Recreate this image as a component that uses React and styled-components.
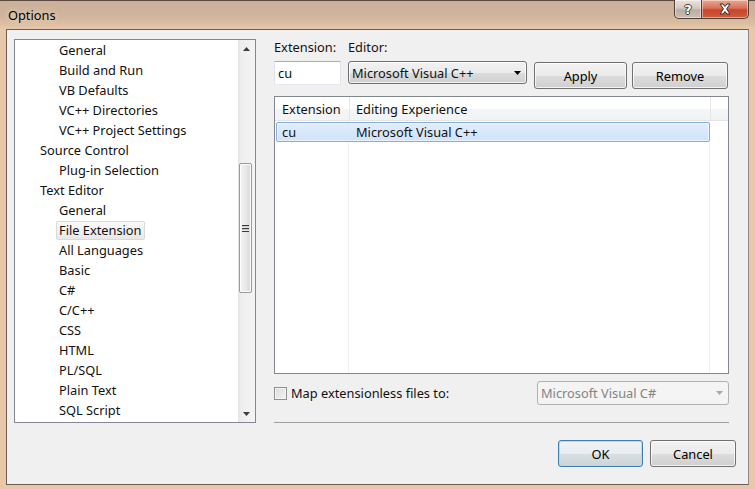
import React from 'react'
import styled, { createGlobalStyle, css } from 'styled-components'

const GlobalStyle = createGlobalStyle`
  html, body {
    margin: 0;
    padding: 0;
  }
  body {
    width: 755px;
    height: 489px;
    overflow: hidden;
    font-family: "Noto Sans", "Open Sans", sans-serif;
    font-size: 12.8px;
    color: #111;
  }
`

const Window = styled.div`
  width: 755px;
  height: 489px;
  box-sizing: border-box;
  display: flex;
  flex-direction: column;
  border-top: 1px solid #5b4a3f;
  background: linear-gradient(
    to bottom,
    #cbb09a 0,
    #d0b49c 14px,
    #dcbea2 23px,
    #e9c8aa 28px,
    #e9c8aa 100%
  );
`

const TitleBar = styled.div`
  height: 28px;
  display: flex;
  align-items: flex-start;
  justify-content: space-between;
`

const Title = styled.span`
  padding: 6px 0 0 8px;
  line-height: 16px;
  color: #000;
  text-shadow: 0 0 6px rgba(255, 240, 225, 0.9);
`

const CaptionButtons = styled.div`
  display: flex;
  margin: -1px 6px 0 0;
`

const CaptionButton = styled.div`
  height: 19px;
  box-sizing: border-box;
  display: flex;
  align-items: center;
  justify-content: center;
  border: 1px solid #4f3e34;
  border-top: none;
  box-shadow: inset 0 0 0 1px rgba(255, 255, 255, 0.45);
  ${({ $close }) =>
    $close
      ? css`
          width: 47px;
          border-left: none;
          border-radius: 0 0 5px 0;
          background: linear-gradient(
            to bottom,
            #e9a894 0,
            #d9715a 45%,
            #c8462b 55%,
            #d05b3c 100%
          );
        `
      : css`
          width: 28px;
          border-radius: 0 0 0 5px;
          background: linear-gradient(
            to bottom,
            #ece2da 0,
            #d6c9bf 45%,
            #bdaea3 55%,
            #cbbdb2 100%
          );
        `}
`

const HelpGlyph = styled.span`
  font-family: "DejaVu Sans", sans-serif;
  font-weight: bold;
  font-size: 13px;
  line-height: 13px;
  color: #fff;
  text-shadow: -1px 0 #3d3d3d, 1px 0 #3d3d3d, 0 -1px #3d3d3d, 0 1px #3d3d3d;
`

const Client = styled.div`
  flex: 1;
  margin: 0 6px 4px 6px;
  box-sizing: border-box;
  border: 1px solid #6a5d53;
  border-right-color: #8f8780;
  background: #f0f0f0;
  padding: 9px 12px 0 7px;
  display: flex;
  flex-direction: column;
`

const Body = styled.div`
  display: flex;
  gap: 18px;
  height: 384px;
`

const Tree = styled.div`
  width: 242px;
  height: 384px;
  box-sizing: border-box;
  border: 1px solid #828790;
  background: #fff;
  display: flex;
`

const TreeItems = styled.div`
  flex: 1;
  display: flex;
  flex-direction: column;
`

const TreeRow = styled.div`
  height: 20px;
  flex-shrink: 0;
  display: flex;
  align-items: center;
  padding-left: ${({ $level }) => ($level === 1 ? 22 : 41)}px;
`

const TreeLabel = styled.span`
  height: 19px;
  box-sizing: border-box;
  line-height: 17px;
  padding: 0 2px;
  border: 1px solid transparent;
  border-radius: 2px;
  white-space: nowrap;
  ${({ $selected }) =>
    $selected &&
    css`
      border-color: #d9d9d9;
      background: linear-gradient(to bottom, #fafafa, #e8e8e8);
    `}
`

const ScrollBar = styled.div`
  width: 17px;
  display: flex;
  flex-direction: column;
  background: linear-gradient(to right, #e3e3e3 0, #eeeeee 3px, #f4f4f4 100%);
`

const ScrollArrow = styled.div`
  height: 17px;
  display: flex;
  align-items: center;
  justify-content: center;
`

const ScrollTrack = styled.div`
  flex: 1;
  padding-top: 106px;
`

const Thumb = styled.div`
  width: 13px;
  height: 130px;
  margin-left: 1px;
  box-sizing: border-box;
  border: 1px solid #9a9a9a;
  border-radius: 2px;
  background: linear-gradient(to right, #f3f3f3 0, #e9e9e9 50%, #d8d8d8 100%);
  box-shadow: inset 0 0 0 1px #fdfdfd;
  display: flex;
  align-items: center;
  justify-content: center;
`

const Grip = styled.div`
  width: 7px;
  height: 7px;
  background: repeating-linear-gradient(
    to bottom,
    #3c3c3c 0,
    #3c3c3c 1px,
    #c8c8c8 1px,
    #c8c8c8 2px,
    transparent 2px,
    transparent 3px
  );
`

const Panel = styled.div`
  width: 455px;
  display: flex;
  flex-direction: column;
`

const LabelRow = styled.div`
  display: flex;
  line-height: 16px;
`

const FieldLabel = styled.span`
  width: ${({ $width }) => ($width ? `${$width}px` : 'auto')};
`

const InputRow = styled.div`
  display: flex;
  align-items: flex-start;
  gap: 7px;
  margin-top: 6px;
  height: 28px;
`

const TextBox = styled.div`
  width: 67px;
  height: 24px;
  box-sizing: border-box;
  background: #fff;
  border: 1px solid #e2e3ea;
  border-top-color: #abadb3;
  border-bottom-color: #e3e9ef;
  padding-left: 3px;
  line-height: 22px;
`

const buttonFace = css`
  box-sizing: border-box;
  border: 1px solid #707070;
  border-radius: 3px;
  background: linear-gradient(
    to bottom,
    #f2f2f2 0,
    #ebebeb 50%,
    #dddddd 51%,
    #cfcfcf 100%
  );
  box-shadow: inset 0 0 0 1px rgba(255, 255, 255, 0.75);
`

const Combo = styled.div`
  width: ${({ $width }) => $width}px;
  height: ${({ $height }) => $height}px;
  display: flex;
  align-items: center;
  justify-content: space-between;
  padding: 0 5px 0 3px;
  ${({ $disabled }) =>
    $disabled
      ? css`
          box-sizing: border-box;
          border: 1px solid #adb2b5;
          border-radius: 3px;
          background: #f4f4f4;
          color: #838383;
          margin-left: auto;
        `
      : buttonFace}
`

const ButtonGroup = styled.div`
  display: flex;
  gap: 5px;
  margin-top: 1px;
`

const Button = styled.button`
  ${buttonFace}
  width: ${({ $width }) => $width}px;
  height: 27px;
  font: inherit;
  color: #000;
  padding: 0;
  ${({ $default }) =>
    $default &&
    css`
      border-color: #3c7fb1;
      box-shadow: inset 0 0 0 1px #a9def5;
      background: linear-gradient(
        to bottom,
        #f1f3f4 0,
        #e9edef 50%,
        #d9dfe2 51%,
        #cdd4d8 100%
      );
    `}
`

const ListView = styled.div`
  margin-top: 7px;
  height: 278px;
  box-sizing: border-box;
  border: 1px solid #828790;
  background: #fff;
  display: flex;
  flex-direction: column;
`

const Header = styled.div`
  height: 24px;
  flex-shrink: 0;
  box-sizing: border-box;
  display: flex;
  border-bottom: 1px solid #e5e5e5;
  background: linear-gradient(to bottom, #ffffff 0, #ffffff 50%, #f4f5f7 50%, #f2f3f5 100%);
`

const HeaderCell = styled.div`
  width: ${({ $width }) => ($width ? `${$width}px` : 'auto')};
  flex: ${({ $width }) => ($width ? 'none' : 1)};
  box-sizing: border-box;
  padding-left: ${({ $pad }) => $pad}px;
  line-height: 24px;
  border-right: ${({ $width }) => ($width ? '1px solid #e5e5e5' : 'none')};
`

const Rows = styled.div`
  flex: 1;
  padding: 1px 0 0 1px;
  background: linear-gradient(
    to right,
    transparent 73px,
    #f0f0f0 73px,
    #f0f0f0 74px,
    transparent 74px,
    transparent 434px,
    #f0f0f0 434px,
    #f0f0f0 435px,
    transparent 435px
  );
`

const Row = styled.div`
  width: 434px;
  height: 20px;
  box-sizing: border-box;
  display: flex;
  line-height: 18px;
  border: 1px solid transparent;
  border-radius: 2px;
  ${({ $selected }) =>
    $selected &&
    css`
      border-color: #84acdd;
      background: linear-gradient(to bottom, #e2eefc 0, #cfe3fc 100%);
      box-shadow: inset 0 0 0 1px rgba(255, 255, 255, 0.55);
    `}
`

const Cell = styled.div`
  width: ${({ $width }) => ($width ? `${$width}px` : 'auto')};
  flex: ${({ $width }) => ($width ? 'none' : 1)};
  padding-left: ${({ $pad }) => $pad}px;
  box-sizing: border-box;
`

const MapRow = styled.div`
  display: flex;
  align-items: center;
  gap: 4px;
  margin-top: 7px;
  height: 24px;
`

const CheckBox = styled.div`
  width: 13px;
  height: 13px;
  box-sizing: border-box;
  border: 1px solid #8e8f8f;
  background: linear-gradient(135deg, #dcdcdc 0, #f2f2f2 100%);
  box-shadow: inset 0 0 0 1px #f4f4f4;
`

const Separator = styled.div`
  margin-top: 17px;
  height: 1px;
  background: #a0a0a0;
`

const Footer = styled.div`
  display: flex;
  justify-content: flex-end;
  gap: 7px;
  margin-top: 17px;
`

const Arrow = ({ up, color = '#000' }) => (
  <svg width="7" height="4" viewBox="0 0 7 4">
    <path d={up ? 'M3.5 0 L7 4 L0 4 Z' : 'M0 0 L7 0 L3.5 4 Z'} fill={color} />
  </svg>
)

const CloseGlyph = () => (
  <svg width="14" height="12" viewBox="0 0 14 12">
    <path
      d="M2 1 H5 L7 3.5 L9 1 H12 L8.6 6 L12 11 H9 L7 8.5 L5 11 H2 L5.4 6 Z"
      fill="#fff"
      stroke="#3b2a24"
      strokeWidth="1"
      strokeLinejoin="round"
    />
  </svg>
)

const treeItems = [
  { label: 'General', level: 2 },
  { label: 'Build and Run', level: 2 },
  { label: 'VB Defaults', level: 2 },
  { label: 'VC++ Directories', level: 2 },
  { label: 'VC++ Project Settings', level: 2 },
  { label: 'Source Control', level: 1 },
  { label: 'Plug-in Selection', level: 2 },
  { label: 'Text Editor', level: 1 },
  { label: 'General', level: 2 },
  { label: 'File Extension', level: 2, selected: true },
  { label: 'All Languages', level: 2 },
  { label: 'Basic', level: 2 },
  { label: 'C#', level: 2 },
  { label: 'C/C++', level: 2 },
  { label: 'CSS', level: 2 },
  { label: 'HTML', level: 2 },
  { label: 'PL/SQL', level: 2 },
  { label: 'Plain Text', level: 2 },
  { label: 'SQL Script', level: 2 },
]

const App = () => (
  <>
    <GlobalStyle />
    <Window>
      <TitleBar>
        <Title>Options</Title>
        <CaptionButtons>
          <CaptionButton>
            <HelpGlyph>?</HelpGlyph>
          </CaptionButton>
          <CaptionButton $close>
            <CloseGlyph />
          </CaptionButton>
        </CaptionButtons>
      </TitleBar>
      <Client>
        <Body>
          <Tree>
            <TreeItems>
              {treeItems.map((item, i) => (
                <TreeRow key={i} $level={item.level}>
                  <TreeLabel $selected={item.selected}>{item.label}</TreeLabel>
                </TreeRow>
              ))}
            </TreeItems>
            <ScrollBar>
              <ScrollArrow>
                <Arrow up color="#3c3c3c" />
              </ScrollArrow>
              <ScrollTrack>
                <Thumb>
                  <Grip />
                </Thumb>
              </ScrollTrack>
              <ScrollArrow>
                <Arrow color="#3c3c3c" />
              </ScrollArrow>
            </ScrollBar>
          </Tree>
          <Panel>
            <LabelRow>
              <FieldLabel $width={74}>Extension:</FieldLabel>
              <FieldLabel>Editor:</FieldLabel>
            </LabelRow>
            <InputRow>
              <TextBox>cu</TextBox>
              <Combo $width={179} $height={23}>
                <span>Microsoft Visual C++</span>
                <Arrow />
              </Combo>
              <ButtonGroup>
                <Button $width={93}>Apply</Button>
                <Button $width={96}>Remove</Button>
              </ButtonGroup>
            </InputRow>
            <ListView>
              <Header>
                <HeaderCell $width={75} $pad={7}>Extension</HeaderCell>
                <HeaderCell $width={361} $pad={6}>Editing Experience</HeaderCell>
                <HeaderCell />
              </Header>
              <Rows>
                <Row $selected>
                  <Cell $width={73} $pad={5}>cu</Cell>
                  <Cell $pad={6}>Microsoft Visual C++</Cell>
                </Row>
              </Rows>
            </ListView>
            <MapRow>
              <CheckBox />
              <span>Map extensionless files to:</span>
              <Combo $disabled $width={192} $height={24}>
                <span>Microsoft Visual C#</span>
                <Arrow color="#a8a8a8" />
              </Combo>
            </MapRow>
            <Separator />
          </Panel>
        </Body>
        <Footer>
          <Button $width={85} $default>OK</Button>
          <Button $width={86}>Cancel</Button>
        </Footer>
      </Client>
    </Window>
  </>
)

export default App
